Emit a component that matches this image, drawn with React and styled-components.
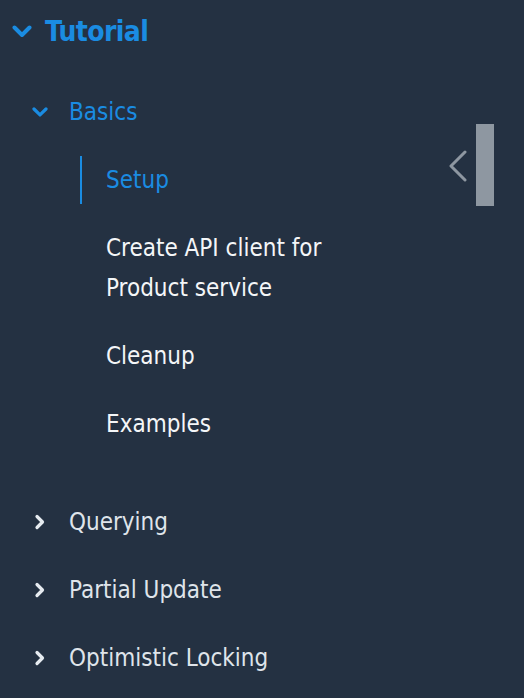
import React from 'react';
import styled, { createGlobalStyle } from 'styled-components';

const GlobalStyle = createGlobalStyle`
  html, body {
    margin: 0;
    padding: 0;
    background: #243142;
  }
  body {
    font-family: "DejaVu Sans Condensed", "Liberation Sans", sans-serif;
  }
`;

const Page = styled.div`
  width: 524px;
  height: 698px;
  background: #243142;
  display: flex;
  overflow: hidden;
`;

const Nav = styled.nav`
  flex: 1;
  padding-top: 10px;
`;

const Row = styled.div`
  display: flex;
  align-items: center;
  color: ${p => p.color};
  font-size: ${p => p.size}px;
  font-weight: ${p => p.weight || 400};
  letter-spacing: ${p => p.spacing || 0}px;
  height: ${p => p.h}px;
  padding-left: ${p => p.indent}px;
  margin-top: ${p => p.top || 0}px;
`;

const Caret = styled.span`
  width: ${p => p.w}px;
  display: inline-flex;
  align-items: center;
  justify-content: flex-start;
  flex-shrink: 0;
`;

const Children = styled.ul`
  list-style: none;
  margin: 0;
  padding: 9px 0 0 80px;
`;

const Leaf = styled.li`
  font-size: 24px;
  line-height: 40px;
  color: ${p => (p.active ? '#1a8ce2' : '#f4f6f8')};
  padding: 4px 0 4px 24px;
  margin-bottom: 20px;
  border-left: 2px solid ${p => (p.active ? '#1a8ce2' : 'transparent')};
  max-width: 240px;
`;

const Sections = styled.div`
  padding-top: 20px;
`;

const Handle = styled.div`
  width: 76px;
  padding-top: 124px;
  display: flex;
  align-items: flex-start;
  gap: 8px;
`;

const HandleArrow = styled.svg`
  margin-top: 26px;
`;

const HandleBar = styled.div`
  width: 18px;
  height: 82px;
  background: #8e97a1;
`;

const Down = ({ size, color }) => (
  <svg width={size} height={size * 0.65} viewBox="0 0 20 13">
    <path d="M2.5 2.5 L10 10 L17.5 2.5" fill="none" stroke={color} strokeWidth="4" strokeLinecap="round" strokeLinejoin="round" />
  </svg>
);

const Right = ({ color }) => (
  <svg width="12" height="16" viewBox="0 0 12 16">
    <path d="M3 2.5 L8.5 8 L3 13.5" fill="none" stroke={color} strokeWidth="3.2" strokeLinecap="round" strokeLinejoin="round" />
  </svg>
);

const sections = ['Querying', 'Partial Update', 'Optimistic Locking'];
const leaves = ['Setup', 'Create API client for Product service', 'Cleanup', 'Examples'];

export default function App() {
  return (
    <Page>
      <GlobalStyle />
      <Nav>
        <Row color="#1a8ce2" size={28} weight={700} spacing={-0.6} h={42} indent={12}>
          <Caret w={33}><Down size={20} color="#1a8ce2" /></Caret>
          Tutorial
        </Row>
        <Row color="#1a8ce2" size={24} h={70} indent={32} top={25}>
          <Caret w={37}><Down size={16} color="#1a8ce2" /></Caret>
          Basics
        </Row>
        <Children>
          {leaves.map((l, i) => (
            <Leaf key={l} active={i === 0}>{l}</Leaf>
          ))}
        </Children>
        <Sections>
          {sections.map(s => (
            <Row key={s} color="#dfe4ea" size={24} h={68} indent={34}>
              <Caret w={35}><Right color="#e6ebf0" /></Caret>
              {s}
            </Row>
          ))}
        </Sections>
      </Nav>
      <Handle>
        <HandleArrow width="20" height="32" viewBox="0 0 20 32">
          <path d="M17 2 L3 16 L17 30" fill="none" stroke="#8e97a1" strokeWidth="3" strokeLinecap="round" strokeLinejoin="round" />
        </HandleArrow>
        <HandleBar />
      </Handle>
    </Page>
  );
}
